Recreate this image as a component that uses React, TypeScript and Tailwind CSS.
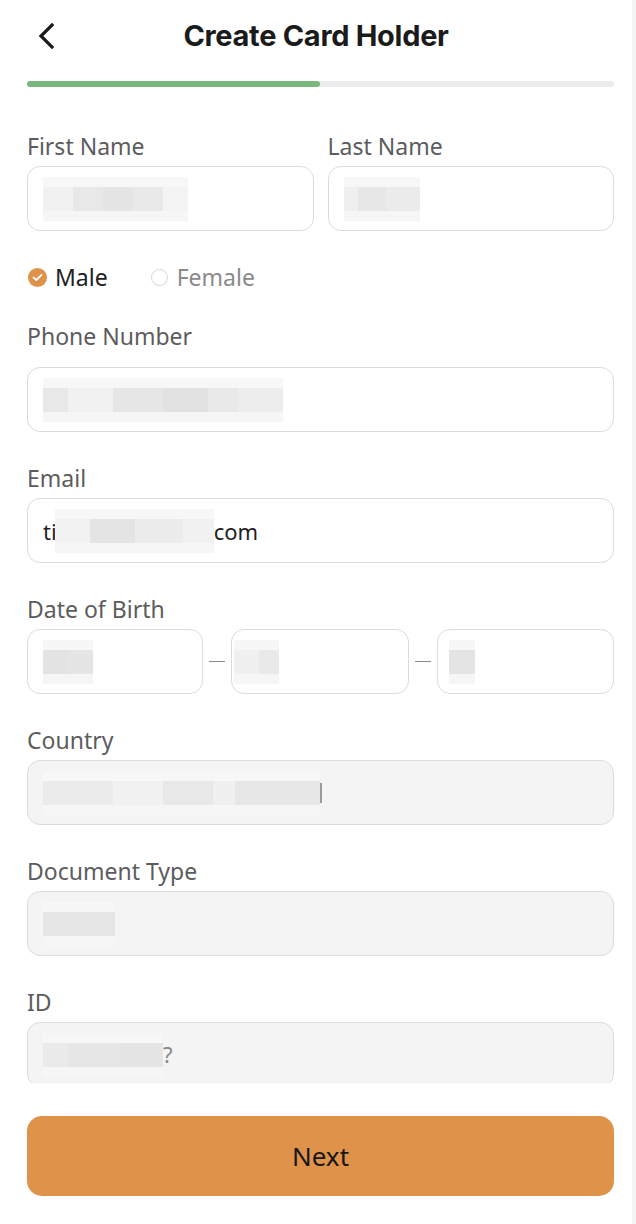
import React from "react";

const font = { fontFamily: '"Noto Sans", "Open Sans", Arial, sans-serif' };

function Blur({ cells }: { cells: { w: number; c: string }[] }) {
  return (
    <div className="flex h-[44px] flex-col">
      <div className="flex h-[10px]">
        {cells.map((x, i) => (
          <div key={i} style={{ width: x.w }} className="bg-[#f7f7f7]" />
        ))}
      </div>
      <div className="flex h-[24px]">
        {cells.map((x, i) => (
          <div key={i} style={{ width: x.w, background: x.c }} />
        ))}
      </div>
      <div className="flex h-[10px]">
        {cells.map((x, i) => (
          <div key={i} style={{ width: x.w }} className="bg-[#f6f6f6]" />
        ))}
      </div>
    </div>
  );
}

function Label({ children, mb = "mb-[5px]" }: { children: React.ReactNode; mb?: string }) {
  return (
    <div className={`h-[30px] text-[23px] leading-[30px] text-[#5c5c5e] ${mb}`}>{children}</div>
  );
}

function Field({
  filled,
  children,
  className = "",
}: {
  filled?: boolean;
  children?: React.ReactNode;
  className?: string;
}) {
  return (
    <div
      className={`flex h-[65px] items-center rounded-[13px] border-[1.5px] border-[#dcdcdc] px-[15px] ${
        filled ? "bg-[#f4f4f4]" : "bg-white"
      } ${className}`}
    >
      {children}
    </div>
  );
}

export default function App() {
  return (
    <div style={font} className="relative flex h-[1224px] w-[636px] overflow-hidden bg-white">
      <div className="flex w-[632px] flex-col">
        {/* header */}
        <div className="relative flex h-[72px] items-center justify-center">
          <svg
            className="absolute left-[36px] top-[22px]"
            width="22"
            height="28"
            viewBox="0 0 22 28"
            fill="none"
          >
            <path d="M16 3 L5 14 L16 25" stroke="#1b1b1b" strokeWidth="3.2" strokeLinecap="square" />
          </svg>
          <div
            className="text-[29px] font-bold leading-[34px] tracking-[-0.3px] text-[#1b1b1b]"
            style={{ fontFamily: '"Inter", "Noto Sans", sans-serif' }}
          >
            Create Card Holder
          </div>
        </div>
        {/* progress */}
        <div className="ml-[27px] mt-[9px] h-[6px] w-[587px] rounded-full bg-[#ececec]">
          <div className="h-[6px] w-[293px] rounded-full bg-[#79b77e]" />
        </div>

        {/* form */}
        <div className="h-[996px] overflow-hidden pl-[27px]">
          <div className="flex w-[587px] flex-col">
            <div className="mt-[44px] flex gap-[14px]">
              <div className="flex-1">
                <Label>First Name</Label>
                <Field>
                  <Blur
                    cells={[
                      { w: 30, c: "#f1f1f1" },
                      { w: 30, c: "#e8e8e8" },
                      { w: 30, c: "#e5e5e5" },
                      { w: 30, c: "#e9e9e9" },
                      { w: 25, c: "#f3f3f3" },
                    ]}
                  />
                </Field>
              </div>
              <div className="flex-1">
                <Label>Last Name</Label>
                <Field>
                  <Blur
                    cells={[
                      { w: 14, c: "#efefef" },
                      { w: 28, c: "#e7e7e7" },
                      { w: 34, c: "#ebebeb" },
                    ]}
                  />
                </Field>
              </div>
            </div>

            {/* gender */}
            <div className="mt-[31px] flex h-[30px] items-center">
              <div className="ml-[1px] flex h-[19px] w-[19px] items-center justify-center rounded-full bg-[#df9249]">
                <svg width="11" height="9" viewBox="0 0 11 9" fill="none">
                  <path d="M1.5 4.5 L4.3 7 L9.5 1.8" stroke="white" strokeWidth="1.8" strokeLinecap="round" strokeLinejoin="round" />
                </svg>
              </div>
              <span className="ml-[8px] text-[23px] leading-[30px] text-[#222]">Male</span>
              <div className="ml-[43px] h-[17px] w-[17px] rounded-full border-[1.5px] border-[#d6d6d6]" />
              <span className="ml-[9px] text-[23px] leading-[30px] text-[#8a8a8a]">Female</span>
            </div>

            {/* phone */}
            <div className="mt-[29px]">
              <Label mb="mb-[16px]">Phone Number</Label>
              <Field>
                <Blur
                  cells={[
                    { w: 25, c: "#e8e8e8" },
                    { w: 45, c: "#f1f1f1" },
                    { w: 50, c: "#e6e6e6" },
                    { w: 45, c: "#e2e2e2" },
                    { w: 30, c: "#e9e9e9" },
                    { w: 45, c: "#ededed" },
                  ]}
                />
              </Field>
            </div>

            {/* email */}
            <div className="mt-[31px]">
              <Label>Email</Label>
              <Field>
                <span className="text-[22px] leading-[30px] text-[#1f1f1f]">ti</span>
                <div className="-ml-[2px]">
                  <Blur
                    cells={[
                      { w: 35, c: "#f2f2f2" },
                      { w: 45, c: "#e4e4e4" },
                      { w: 48, c: "#ececec" },
                      { w: 31, c: "#f1f1f1" },
                    ]}
                  />
                </div>
                <span className="text-[22px] leading-[30px] text-[#1f1f1f]">com</span>
              </Field>
            </div>

            {/* dob */}
            <div className="mt-[31px]">
              <Label>Date of Birth</Label>
              <div className="flex items-center">
                <Field className="w-[177px]">
                  <Blur cells={[{ w: 25, c: "#e3e3e3" }, { w: 25, c: "#e5e5e5" }]} />
                </Field>
                <div className="mx-[6px] h-[1.5px] w-[16px] bg-[#8a8a8a]" />
                <Field className="w-[178px] !pl-[2px]">
                  <Blur cells={[{ w: 25, c: "#f0f0f0" }, { w: 20, c: "#e9e9e9" }]} />
                </Field>
                <div className="mx-[6px] h-[1.5px] w-[16px] bg-[#8a8a8a]" />
                <Field className="w-[178px] !pl-[11px]">
                  <Blur cells={[{ w: 26, c: "#e4e4e4" }]} />
                </Field>
              </div>
            </div>

            {/* country */}
            <div className="mt-[31px]">
              <Label>Country</Label>
              <Field filled>
                <Blur
                  cells={[
                    { w: 70, c: "#ebebeb" },
                    { w: 50, c: "#f1f1f1" },
                    { w: 50, c: "#e8e8e8" },
                    { w: 22, c: "#f0f0f0" },
                    { w: 85, c: "#e7e7e7" },
                  ]}
                />
                <div className="h-[20px] w-[2px] bg-[#9a9a9a]" />
              </Field>
            </div>

            {/* document type */}
            <div className="mt-[31px]">
              <Label>Document Type</Label>
              <Field filled>
                <Blur cells={[{ w: 72, c: "#e6e6e6" }]} />
              </Field>
            </div>

            {/* id */}
            <div className="mt-[31px]">
              <Label>ID</Label>
              <Field filled>
                <Blur
                  cells={[
                    { w: 25, c: "#eaeaea" },
                    { w: 50, c: "#e6e6e6" },
                    { w: 45, c: "#e5e5e5" },
                  ]}
                />
                <span className="text-[22px] text-[#888]">?</span>
              </Field>
            </div>
          </div>
        </div>

        {/* button */}
        <div className="ml-[27px] mt-[33px] flex h-[80px] w-[587px] items-center justify-center rounded-[15px] bg-[#df9249]">
          <span className="text-[26px] leading-[34px] text-[#161616]">Next</span>
        </div>
      </div>
      <div className="w-[4px] bg-[#f4f4f4]" />
    </div>
  );
}
